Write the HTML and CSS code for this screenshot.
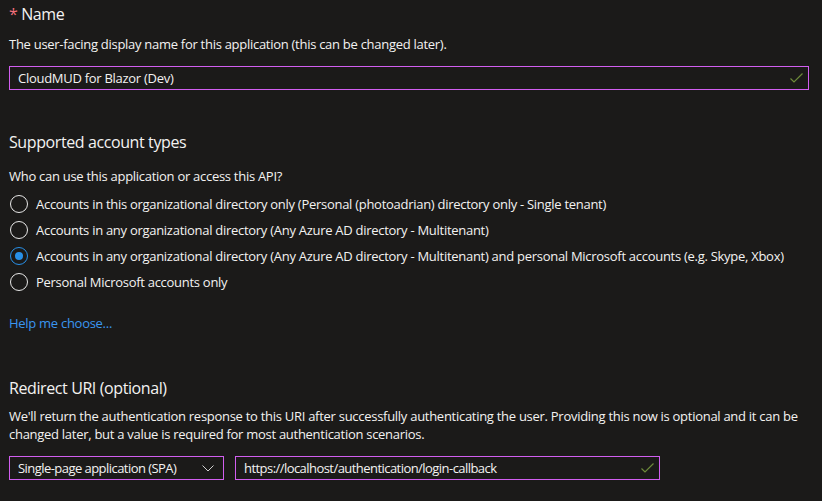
FILE: index.html
```html
<!DOCTYPE html>
<html lang="en">
<head>
<meta charset="utf-8">
<title>Register an application</title>
<link rel="stylesheet" href="styles.css">
</head>
<body>
<div class="page">
  <section class="section name-section">
    <h2 class="heading"><span class="req">*</span> Name</h2>
    <p class="desc">The user-facing display name for this application (this can be changed later).</p>
    <div class="field field-full">
      <span class="field-text">CloudMUD for Blazor (Dev)</span>
      <svg class="check" width="13" height="10" viewBox="0 0 13 10"><path d="M0.5 5.5 L4 9 L12.5 0.5" fill="none" stroke="#6d8b3a" stroke-width="1.2"/></svg>
    </div>
  </section>

  <section class="section accounts-section">
    <h2 class="heading">Supported account types</h2>
    <p class="desc">Who can use this application or access this API?</p>
    <div class="radios">
      <div class="radio-row"><span class="radio"></span><span>Accounts in this organizational directory only (Personal (photoadrian) directory only - Single tenant)</span></div>
      <div class="radio-row"><span class="radio"></span><span>Accounts in any organizational directory (Any Azure AD directory - Multitenant)</span></div>
      <div class="radio-row"><span class="radio checked"></span><span>Accounts in any organizational directory (Any Azure AD directory - Multitenant) and personal Microsoft accounts (e.g. Skype, Xbox)</span></div>
      <div class="radio-row"><span class="radio"></span><span>Personal Microsoft accounts only</span></div>
    </div>
    <a class="link" href="#">Help me choose...</a>
  </section>

  <section class="section redirect-section">
    <h2 class="heading">Redirect URI (optional)</h2>
    <p class="desc desc-wrap">We'll return the authentication response to this URI after successfully authenticating the user. Providing this now is optional and it can be changed later, but a value is required for most authentication scenarios.</p>
    <div class="uri-row">
      <div class="field field-select">
        <span class="field-text tight">Single-page application (SPA)</span>
        <svg class="chev" width="12" height="7" viewBox="0 0 12 7"><path d="M0.5 0.5 L6 6 L11.5 0.5" fill="none" stroke="#d0d0d0" stroke-width="1"/></svg>
      </div>
      <div class="field field-uri">
        <span class="field-text tight">https://localhost/authentication/login-callback</span>
        <svg class="check" width="13" height="10" viewBox="0 0 13 10"><path d="M0.5 5.5 L4 9 L12.5 0.5" fill="none" stroke="#6d8b3a" stroke-width="1.2"/></svg>
      </div>
    </div>
  </section>
</div>
</body>
</html>
```
FILE: styles.css
```css
html, body {
  margin: 0;
  padding: 0;
  background: #1b1a19;
}
body {
  font-family: "Open Sans", "Noto Sans", sans-serif;
  color: #f3f2f1;
  font-size: 13px;
  letter-spacing: -0.28px;
  width: 822px;
  height: 501px;
  overflow: hidden;
}
.page {
  padding: 0 13px 0 9px;
}
.section { margin: 0; }
.heading {
  margin: 0;
  font-size: 16px;
  font-weight: 400;
  letter-spacing: -0.4px;
  line-height: 22px;
  color: #f3f2f1;
}
.req { color: #f1707b; }
.name-section .heading { padding-top: 3px; }
.desc {
  margin: 0;
  line-height: 18px;
}
.name-section .desc { margin-top: 10px; }
.field {
  display: flex;
  align-items: center;
  justify-content: space-between;
  height: 24px;
  box-sizing: border-box;
  border: 1px solid #d15ef0;
  padding: 0 5px 0 8px;
}
.field-text.tight { letter-spacing: -0.55px; }
.field-full { margin-top: 13px; width: 800px; }
.check { flex: none; }
.accounts-section { margin-top: 41px; }
.accounts-section .desc { margin-top: 14px; }
.radios {
  display: flex;
  flex-direction: column;
  margin-top: 6px;
}
.radio-row {
  display: flex;
  align-items: center;
  gap: 8px;
  height: 26px;
  white-space: nowrap;
}
.radio {
  width: 18px;
  height: 18px;
  box-sizing: border-box;
  border: 1px solid #e8e8e8;
  border-radius: 50%;
  margin-left: 1px;
  flex: none;
  display: flex;
  align-items: center;
  justify-content: center;
}
.radio.checked { border-color: #2890e8; }
.radio.checked::after {
  content: "";
  width: 8px;
  height: 8px;
  border-radius: 50%;
  background: #2890e8;
}
.link {
  display: block;
  margin-top: 19px;
  color: #3a96f0;
  text-decoration: none;
  line-height: 18px;
}
.redirect-section { margin-top: 45px; }
.redirect-section .desc { margin-top: 8px; }
.uri-row {
  display: flex;
  gap: 11px;
  margin-top: 13px;
}
.field-select { width: 215px; padding-right: 9px; }
.field-uri { width: 425px; }
```
